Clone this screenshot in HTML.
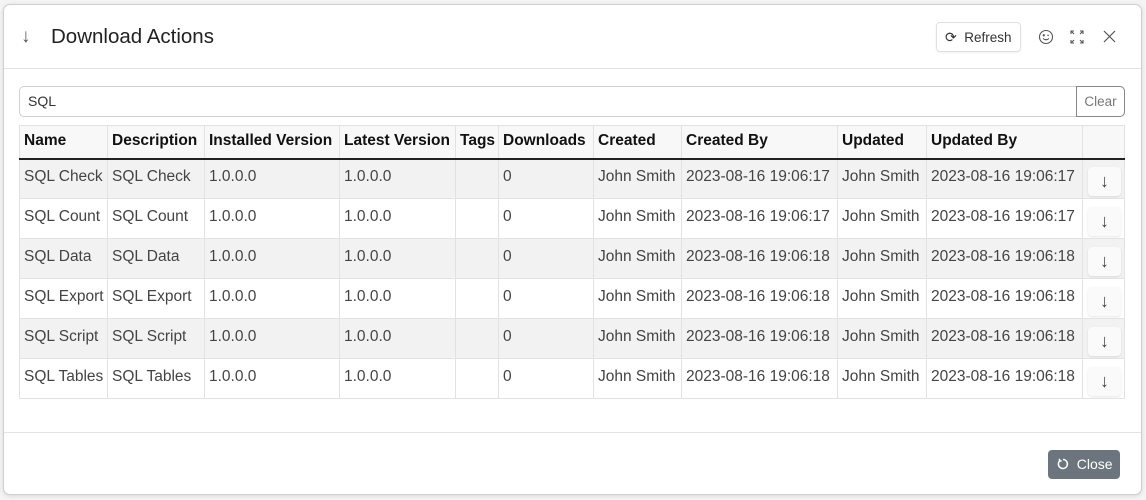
<!DOCTYPE html>
<html><head><meta charset="utf-8"><style>
*{box-sizing:border-box;margin:0;padding:0}
body{width:1146px;height:500px;background:#f4f4f4;font-family:"Liberation Sans",sans-serif;color:#212529;position:relative;overflow:hidden}
.modal{position:absolute;left:3px;top:4px;width:1139px;height:491px;background:#fff;border:1px solid #cfcfcf;border-radius:7px;box-shadow:0 1px 4px rgba(0,0,0,.12)}
.hdr{position:absolute;left:0;top:0;width:100%;height:64px;border-bottom:1px solid #e3e3e3}
.arrow{position:absolute;left:17px;top:21px;font-size:19px;color:#555}
.title{position:absolute;left:47px;top:20px;font-size:20.5px;color:#222}
.btn{position:absolute;border:1px solid #e0e0e0;border-radius:4px;background:#fff;font-size:13.5px;color:#333}
table{position:absolute;left:15px;top:120px;border-collapse:collapse;table-layout:fixed;font-size:15.5px}
td,th{border:1px solid #e2e2e2;white-space:nowrap;overflow:hidden;text-align:left;padding:0 0 4px 4px;height:40px}
th{height:33px;font-weight:bold;background:#f8f8f8;border-bottom:2px solid #222;color:#111;padding-bottom:1px}
tr.s td{background:#f2f2f2}
td{color:#444}
td.b{padding:0}
.dl{display:inline-block;width:33px;height:29px;background:#fafafa;border-radius:4px;box-shadow:0 1px 2px rgba(0,0,0,.1);text-align:center;line-height:29px;font-size:18px;color:#444;margin-left:5px;margin-top:5px}
</style></head><body>
<div class="modal">
 <div class="hdr">
  <div class="arrow">↓</div>
  <div class="title">Download Actions</div>
  <div class="btn" style="left:932px;top:17px;width:85px;height:30px;line-height:28px;padding-left:8px;box-shadow:0 1px 2px rgba(0,0,0,.06)"><span style="font-size:14px">⟳</span>&nbsp; Refresh</div>
  <svg style="position:absolute;left:1034px;top:24px" width="16" height="16" viewBox="0 0 16 16" fill="none" stroke="#555" stroke-width="1.1"><circle cx="8" cy="8" r="6.5"/><circle cx="5.8" cy="6.3" r=".6" fill="#555"/><path d="M9.3 6.3h1.6M5 9.5q3 2.5 6 0"/></svg>
  <svg style="position:absolute;left:1065px;top:24px" width="16" height="16" viewBox="0 0 16 16" fill="none" stroke="#555" stroke-width="1.1"><path d="M2 5V2h3M2 2l3 3M11 2h3v3M14 2l-3 3M2 11v3h3M2 14l3-3M14 11v3h-3M14 14l-3-3"/></svg>
  <svg style="position:absolute;left:1099px;top:25px" width="13" height="13" viewBox="0 0 13 13" stroke="#555" stroke-width="1.2"><path d="M1 1l11 11M12 1L1 12"/></svg>
 </div>
 <div style="position:absolute;left:15px;top:81px;width:1106px;height:31px;border:1px solid #d0d0d0;border-radius:5px;font-size:14px;line-height:29px;padding-left:8px;color:#333">SQL</div>
 <div style="position:absolute;left:1072px;top:81px;width:49px;height:31px;border:1px solid #888;border-radius:0 5px 5px 0;font-size:13.5px;line-height:29px;text-align:center;color:#777">Clear</div>
 <table>
  <colgroup><col style="width:88px"><col style="width:97px"><col style="width:135px"><col style="width:116px"><col style="width:43px"><col style="width:95px"><col style="width:88px"><col style="width:156px"><col style="width:89px"><col style="width:156px"><col style="width:42px"></colgroup>
  <tr><th>Name</th><th>Description</th><th>Installed Version</th><th>Latest Version</th><th>Tags</th><th>Downloads</th><th>Created</th><th>Created By</th><th>Updated</th><th>Updated By</th><th></th></tr>
  <tr class="s"><td>SQL Check</td><td>SQL Check</td><td>1.0.0.0</td><td>1.0.0.0</td><td></td><td>0</td><td>John Smith</td><td>2023-08-16 19:06:17</td><td>John Smith</td><td>2023-08-16 19:06:17</td><td class="b"><span class="dl">↓</span></td></tr>
  <tr><td>SQL Count</td><td>SQL Count</td><td>1.0.0.0</td><td>1.0.0.0</td><td></td><td>0</td><td>John Smith</td><td>2023-08-16 19:06:17</td><td>John Smith</td><td>2023-08-16 19:06:17</td><td class="b"><span class="dl">↓</span></td></tr>
  <tr class="s"><td>SQL Data</td><td>SQL Data</td><td>1.0.0.0</td><td>1.0.0.0</td><td></td><td>0</td><td>John Smith</td><td>2023-08-16 19:06:18</td><td>John Smith</td><td>2023-08-16 19:06:18</td><td class="b"><span class="dl">↓</span></td></tr>
  <tr><td>SQL Export</td><td>SQL Export</td><td>1.0.0.0</td><td>1.0.0.0</td><td></td><td>0</td><td>John Smith</td><td>2023-08-16 19:06:18</td><td>John Smith</td><td>2023-08-16 19:06:18</td><td class="b"><span class="dl">↓</span></td></tr>
  <tr class="s"><td>SQL Script</td><td>SQL Script</td><td>1.0.0.0</td><td>1.0.0.0</td><td></td><td>0</td><td>John Smith</td><td>2023-08-16 19:06:18</td><td>John Smith</td><td>2023-08-16 19:06:18</td><td class="b"><span class="dl">↓</span></td></tr>
  <tr><td>SQL Tables</td><td>SQL Tables</td><td>1.0.0.0</td><td>1.0.0.0</td><td></td><td>0</td><td>John Smith</td><td>2023-08-16 19:06:18</td><td>John Smith</td><td>2023-08-16 19:06:18</td><td class="b"><span class="dl">↓</span></td></tr>
 </table>
 <div style="position:absolute;left:0;top:427px;width:100%;border-top:1px solid #e3e3e3"></div>
 <div style="position:absolute;left:1044px;top:445px;width:72px;height:29px;background:#6c757d;border-radius:4px;color:#fff;font-size:14px;line-height:29px;padding-left:9px"><svg width="12" height="12" viewBox="0 0 12 12" fill="none" stroke="#fff" stroke-width="1.5" style="vertical-align:-1px"><path d="M3.5 2.2A4.5 4.5 0 1 0 6 1.5"/><path d="M2.5 0.8v2.2h2.2"/></svg>&nbsp; Close</div>
</div>
</body></html>
